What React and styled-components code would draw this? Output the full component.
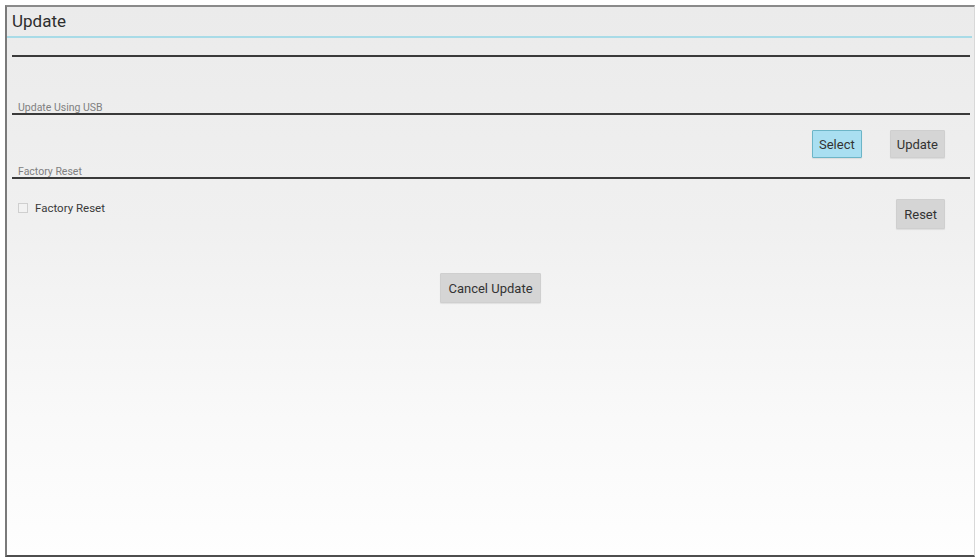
import React from "react";
import styled, { createGlobalStyle } from "styled-components";

const GlobalStyle = createGlobalStyle`
  *, *::before, *::after {
    box-sizing: border-box;
  }
  html, body {
    margin: 0;
    padding: 0;
    background: #ffffff;
    font-family: Roboto, "Liberation Sans", sans-serif;
  }
`;

const Frame = styled.div`
  margin: 5px 3px 0 5px;
  height: 552px;
  border-left: 2px solid #7a7a7a;
  border-top: 2px solid #8a8a8a;
  border-bottom: 2px solid #4e4e4e;
  border-right: 1px solid #d8d8d8;
  background: linear-gradient(to bottom, #ebebeb 0%, #f0f0f0 40%, #f9f9f9 75%, #fefefe 100%);
  display: flex;
  flex-direction: column;
`;

const TitleBar = styled.div`
  height: 31px;
  padding-left: 5px;
  font-size: 17px;
  line-height: 29px;
  color: #2e2e2e;
  border-bottom: 2px solid #a8dbe7;
  margin-right: 2px;
`;

const SectionHead = styled.div`
  height: ${(p) => p.$h}px;
  margin: 0 4px 0 5px;
  padding-left: 6px;
  border-bottom: 2px solid #3a3a3a;
  display: flex;
  align-items: flex-end;
  font-size: 10.5px;
  line-height: 11px;
  color: #808080;
`;

const ButtonRow = styled.div`
  height: ${(p) => p.$h}px;
  display: flex;
  align-items: flex-start;
  justify-content: ${(p) => p.$justify || "flex-end"};
  padding: ${(p) => p.$pad};
  gap: 28px;
`;

const Button = styled.button`
  height: ${(p) => p.$h || 28}px;
  padding: 0 ${(p) => p.$px || 6}px;
  font-family: Roboto, "Liberation Sans", sans-serif;
  font-size: 13px;
  color: #333;
  background: ${(p) => (p.$active ? "#a9dff1" : "#d5d5d5")};
  border: 1px solid ${(p) => (p.$active ? "#6cb5c7" : "#cfcfcf")};
  border-radius: 1px;
  box-shadow: 0 1px 1px rgba(0, 0, 0, 0.08);
  cursor: pointer;
`;

const CheckRow = styled.div`
  height: 50px;
  display: flex;
  justify-content: space-between;
  align-items: flex-start;
  padding: 20px 29px 0 11px;
`;

const CheckLabel = styled.label`
  display: flex;
  align-items: center;
  gap: 7px;
  margin-top: 2px;
  font-size: 11.5px;
  color: #3a3a3a;
`;

const Box = styled.span`
  width: 10px;
  height: 10px;
  border: 1px solid #cfcfcf;
  background: #f2f2f2;
`;

export default function App() {
  return (
    <>
      <GlobalStyle />
      <Frame>
        <TitleBar>Update</TitleBar>
        <SectionHead $h={19} />
        <SectionHead $h={58}>Update Using USB</SectionHead>
        <ButtonRow $h={48} $pad="15px 29px 0 0">
          <Button $active>Select</Button>
          <Button>Update</Button>
        </ButtonRow>
        <SectionHead $h={16}>Factory Reset</SectionHead>
        <CheckRow>
          <CheckLabel>
            <Box />
            Factory Reset
          </CheckLabel>
          <Button $h={30} $px={7}>Reset</Button>
        </CheckRow>
        <ButtonRow $justify="center" $pad="44px 0 0 0" $h={80}>
          <Button $h={30} $px={7}>Cancel Update</Button>
        </ButtonRow>
      </Frame>
    </>
  );
}
